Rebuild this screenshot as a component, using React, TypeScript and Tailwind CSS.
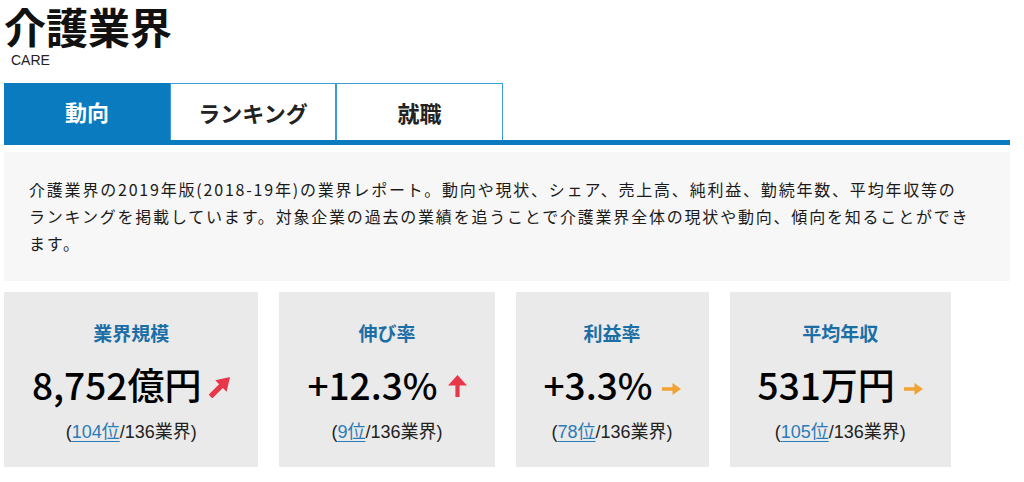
const cjk = "font-['Noto_Sans_CJK_JP',sans-serif]";
const num = "font-['Liberation_Sans','Noto_Sans_CJK_JP',sans-serif]";

type Trend = "diag" | "up" | "right";

type Stat = {
  label: string;
  value: string;
  rank: string;
  trend: Trend;
};

const stats: Stat[] = [
  { label: "業界規模", value: "8,752億円", rank: "104位", trend: "diag" },
  { label: "伸び率", value: "+12.3%", rank: "9位", trend: "up" },
  { label: "利益率", value: "+3.3%", rank: "78位", trend: "right" },
  { label: "平均年収", value: "531万円", rank: "105位", trend: "right" },
];

function TrendArrow({ trend }: { trend: Trend }) {
  if (trend === "right") {
    return (
      <svg width="19" height="12" viewBox="0 0 19 12" className="mt-[10px] ml-[9px] shrink-0">
        <polygon points="0,4.2 10.5,4.2 10.5,0 19,6 10.5,12 10.5,7.8 0,7.8" fill="#f0a332" />
      </svg>
    );
  }
  if (trend === "up") {
    return (
      <svg width="19" height="22" viewBox="0 0 19 22" className="mt-[4px] ml-[10px] shrink-0">
        <polygon points="9.5,0 19,10.5 11.6,10.5 11.6,22 7.4,22 7.4,10.5 0,10.5" fill="#e8364a" />
      </svg>
    );
  }
  return (
    <svg width="21" height="21" viewBox="0 0 20 20" className="mt-[6px] ml-[8px] shrink-0">
      <polygon points="20,0 16.8,14 13.2,10.4 3.2,20.4 -0.4,16.8 9.6,6.8 6,3.2" fill="#e8364a" />
    </svg>
  );
}

function StatCard({ stat }: { stat: Stat }) {
  return (
    <div className="bg-[#eaeaea] px-7 pt-[27px] pb-[23px] flex flex-col items-center">
      <div className={`${cjk} text-[19px] leading-[28px] font-bold text-[#1c6fa6]`}>
        {stat.label}
      </div>
      <div className="mt-[13px] h-[48px] flex items-center">
        <span className={`${cjk} text-[37px] leading-[48px] font-medium text-black`}>
          {stat.value}
        </span>
        <TrendArrow trend={stat.trend} />
      </div>
      <div className={`${num} mt-[12px] text-[18px] leading-[24px] text-[#222]`}>
        (
        <a href="#" className="text-[#2a7bb8] underline underline-offset-[3px]">
          {stat.rank}
        </a>
        /136業界)
      </div>
    </div>
  );
}

export default function App() {
  const tabs = ["動向", "ランキング", "就職"];
  return (
    <div className={`${cjk} w-[1006px] ml-[4px] text-[#111]`}>
      <h1 className="text-[42px] leading-[52px] font-bold">介護業界</h1>
      <p className="font-['Liberation_Sans',sans-serif] pl-[7px] text-[14px] leading-[16px] text-[#222]">
        CARE
      </p>

      <div className="mt-[15px] flex border-b-[5px] border-[#0a7bbf]">
        {tabs.map((tab, i) => (
          <div
            key={tab}
            className={
              i === 0
                ? "w-[166px] h-[57px] flex items-center justify-center bg-[#0a7bbf] text-white text-[22px] font-bold"
                : i === 1
                  ? "w-[166px] h-[57px] flex items-center justify-center bg-white border border-b-0 border-[#3d9bd6] text-[#222] text-[22px] font-bold"
                  : "w-[167px] h-[57px] flex items-center justify-center bg-white border border-b-0 border-[#3d9bd6] text-[#222] text-[22px] font-bold"
            }
          >
            {tab}
          </div>
        ))}
      </div>

      <div className="mt-[7px] bg-[#f7f7f7] pl-[25px] pr-[36px] py-[24px]">
        <p className="text-[16px] leading-[27px] tracking-[1.8px] text-[#1a1a1a]">
          介護業界の2019年版(2018-19年)の業界レポート。動向や現状、シェア、売上高、純利益、勤続年数、平均年収等のランキングを掲載しています。対象企業の過去の業績を追うことで介護業界全体の現状や動向、傾向を知ることができます。
        </p>
      </div>

      <div className="mt-[11px] flex gap-[21px] items-start">
        {stats.map((s) => (
          <StatCard key={s.label} stat={s} />
        ))}
      </div>
    </div>
  );
}
